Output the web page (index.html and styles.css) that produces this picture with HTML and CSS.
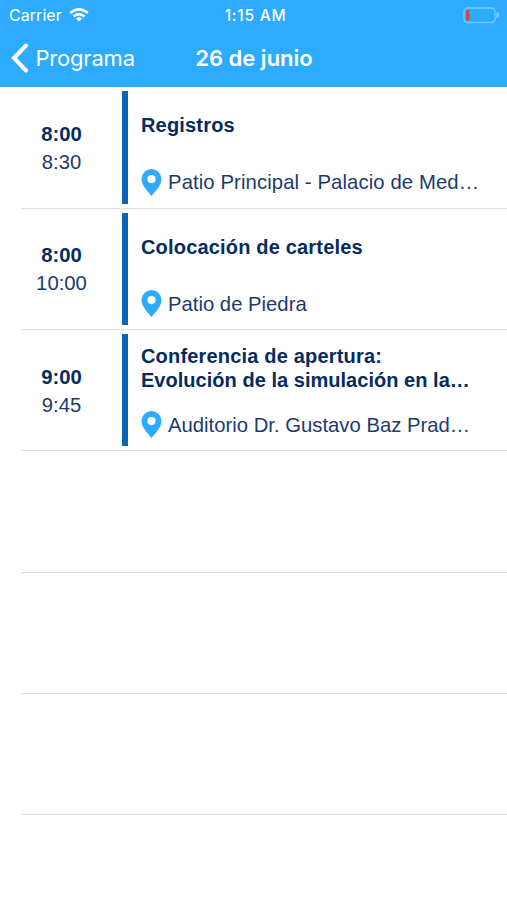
FILE: index.html
```html
<!DOCTYPE html>
<html lang="es">
<head>
<meta charset="utf-8">
<title>26 de junio</title>
<link rel="stylesheet" href="styles.css">
</head>
<body>
<svg width="0" height="0" class="defs"><symbol id="pin" viewBox="0 0 20 27"><path fill-rule="evenodd" d="M10 0A10 10 0 0 0 0 10C0 16.8 6.8 23 10 27C13.2 23 20 16.8 20 10A10 10 0 0 0 10 0ZM10 6A4.1 4.1 0 1 1 10 14.2A4.1 4.1 0 1 1 10 6Z"/></symbol></svg>
<header class="header">
  <div class="status">
    <div class="carrier"><span class="carrier-name">Carrier</span>
      <svg class="wifi" viewBox="0 0 20 14"><g fill="none" stroke="#fff" stroke-width="2.5"><path d="M1.2 5Q10 -2.2 18.8 5"/><path d="M4.5 8.5Q10 3.8 15.5 8.5"/></g><path fill="#fff" d="M6.9 10.4Q10 8.1 13.1 10.4L10 13.6Z"/></svg>
    </div>
    <span class="clock">1:15 AM</span>
    <svg class="battery" viewBox="0 0 37 17"><rect x="1" y="1" width="31" height="14.5" rx="3.5" fill="none" stroke="#72c7ff" stroke-width="1.4"/><rect x="3" y="3" width="3.6" height="10.5" rx="1" fill="#cb4b50"/><path d="M33.4 5.3Q36.2 5.5 36.2 8.2T33.4 11Z" fill="#72c7ff"/></svg>
  </div>
  <nav class="nav">
    <a class="back"><svg class="chevron" viewBox="0 0 18 30"><path d="M15 2.5L3 15L15 27.5" fill="none" stroke="#fff" stroke-width="4" stroke-linecap="round"/></svg><span class="back-label">Programa</span></a>
    <h1 class="title">26 de junio</h1>
  </nav>
</header>
<main class="list">
  <article class="row">
    <div class="times"><b class="start">8:00</b><span class="end">8:30</span></div>
    <div class="bar"></div>
    <div class="info"><h2 class="name">Registros</h2><div class="place"><svg class="pin"><use href="#pin"/></svg><span class="wide">Patio Principal - Palacio de Med…</span></div></div>
  </article>
  <article class="row">
    <div class="times"><b class="start">8:00</b><span class="end">10:00</span></div>
    <div class="bar"></div>
    <div class="info"><h2 class="name">Colocación de carteles</h2><div class="place"><svg class="pin"><use href="#pin"/></svg><span>Patio de Piedra</span></div></div>
  </article>
  <article class="row">
    <div class="times"><b class="start">9:00</b><span class="end">9:45</span></div>
    <div class="bar"></div>
    <div class="info"><h2 class="name"><span>Conferencia de apertura:<br><span class="snug">Evolución de la simulación en la…</span></span></h2><div class="place"><svg class="pin"><use href="#pin"/></svg><span>Auditorio Dr. Gustavo Baz Prad…</span></div></div>
  </article>
  <div class="row"></div>
  <div class="row"></div>
  <div class="row"></div>
</main>
</body>
</html>
```
FILE: styles.css
```css
* { box-sizing: border-box; }
body { margin: 0; height: 900px; overflow: hidden; background: #fff; color: #1c3a6e; font-family: "Liberation Sans", Arial, sans-serif; }
.defs { position: absolute; }
.header { height: 87px; background: #2dacff; color: #fff; font-family: Inter, sans-serif; }
.status { height: 30px; display: grid; grid-template-columns: 1fr auto 1fr; align-items: center; padding: 0 7px 0 9px; }
.carrier { display: flex; align-items: center; gap: 7px; font-size: 16px; letter-spacing: .05px; }
.wifi { width: 20px; height: 14px; }
.clock { font-size: 15.5px; font-weight: 500; letter-spacing: .75px; padding-left: 2px; }
.battery { width: 37px; height: 17px; justify-self: end; }
.nav { height: 55px; display: grid; grid-template-columns: 1fr auto 1fr; align-items: center; padding: 0 10px 0 11px; }
.back { display: flex; align-items: center; gap: 6.5px; font-size: 22px; }
.back-label { letter-spacing: -.2px; }
.chevron { width: 18px; height: 30px; }
.title { margin: 0; font-size: 22px; font-weight: 600; }
.list { display: flex; flex-direction: column; padding-top: .4px; }
.row { height: 121.3px; flex: none; margin-left: 21px; border-bottom: 1.5px solid #dedee0; display: flex; padding-top: 4px; }
.times { width: 81px; display: flex; flex-direction: column; align-items: center; padding-top: 28.6px; font-size: 20.3px; line-height: 28px; }
.start { color: #062b60; }
.bar { width: 5.5px; height: 112.5px; margin-left: 20px; background: #0b64b4; }
.info { height: 112px; flex: 1; margin-left: 13.5px; display: flex; flex-direction: column; }
.name { height: 68px; margin: 0; display: flex; align-items: center; font-size: 20px; line-height: 24px; letter-spacing: .18px; color: #062b60; }
.snug { letter-spacing: .03px; }
.place { display: flex; align-items: center; gap: 6px; margin-top: 9px; font-size: 20.3px; line-height: 28px; white-space: nowrap; }
.wide { letter-spacing: .1px; }
.pin { width: 21px; height: 27px; fill: #2dacff; }
```
